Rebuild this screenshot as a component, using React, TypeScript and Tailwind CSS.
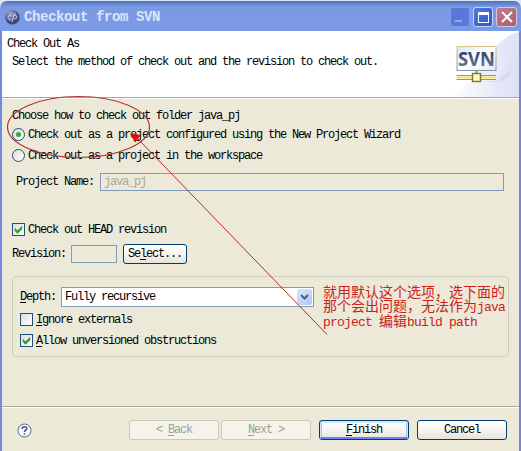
import type { ReactNode } from 'react';

function Check({ checked = false }: { checked?: boolean }) {
  return (
    <span className="flex h-[13px] w-[13px] shrink-0 items-center justify-center border border-[#1c5180] bg-linear-to-br from-[#dcdcd7] to-white">
      {checked && (
        <svg className="h-[9px] w-[9px]" viewBox="0 0 9 9">
          <path d="M1 3.2 L3.5 5.7 L8 1.2 V4 L3.5 8.5 L1 6 Z" fill="#21a121" stroke="#21a121" strokeWidth=".4" />
        </svg>
      )}
    </span>
  );
}

function Radio({ checked = false }: { checked?: boolean }) {
  return (
    <span className="flex h-[13px] w-[13px] shrink-0 items-center justify-center rounded-full border border-[#1c5180] bg-linear-to-br from-[#dcdcd7] to-white">
      {checked && <span className="h-[5px] w-[5px] rounded-full bg-[#2fae2f]" />}
    </span>
  );
}

function Key({ children }: { children: ReactNode }) {
  return <span className="underline underline-offset-2">{children}</span>;
}

function Button({ className, children }: { className: string; children: ReactNode }) {
  return (
    <button
      className={`flex h-5 items-center justify-center whitespace-pre rounded-[3px] border ${className}`}
    >
      {children}
    </button>
  );
}

const enabled = 'border-[#003c74] bg-linear-to-b from-white via-[#f6f5f0] to-[#e6e3da]';
const disabled = 'border-[#c9c7ba] bg-[#f5f4ea] text-[#a1a192]';

export default function App() {
  return (
    <div className="relative flex h-[451px] w-[521px] flex-col overflow-hidden bg-[#dce6f4] font-['Liberation_Mono','Noto_Sans_CJK_SC',monospace] text-[12px] leading-3 tracking-[-1.2px] text-black">
      <div className="mt-px flex h-[30px] shrink-0 items-center rounded-t-[7px] bg-linear-to-b from-[#4b72ba] via-[#7b99e2] via-20% to-[#7c9ae6] pl-[5px] pr-1 pt-0.5">
        <svg className="h-[15px] w-[15px]" viewBox="0 0 15 15">
          <defs>
            <radialGradient id="orb" cx="35%" cy="25%">
              <stop offset="0" stopColor="#a9a9cf" />
              <stop offset="1" stopColor="#434781" />
            </radialGradient>
          </defs>
          <circle cx="7.5" cy="7.5" r="7.2" fill="url(#orb)" />
          <path
            d="M6.5 6 A2.2 2.2 0 1 0 6.5 9.5 M7 12 L9 4.5 Q9.8 3 11 4 M9 5.5 Q12.5 5 12 7.5 Q11 9.5 8.6 8.5"
            fill="none"
            stroke="#c9cde9"
            strokeWidth="1"
          />
        </svg>
        <span className="ml-1 text-sm font-bold tracking-[-0.4px] text-[#d9e6fb]">
          Checkout from SVN
        </span>
        <div className="ml-auto flex gap-[3px]">
          <span className="flex h-5 w-5 items-end rounded-[3px] border border-[#7f9ce8] bg-[#5a78d8] pb-1 pl-1">
            <span className="h-0.5 w-[7px] bg-[#8ba8f0]" />
          </span>
          <span className="flex h-5 w-5 items-center justify-center rounded-[3px] border border-[#c3d3f7] bg-linear-to-br from-[#5279dc] to-[#2a57d0]">
            <span className="h-[11px] w-[11px] border border-t-[3px] border-white" />
          </span>
          <span className="flex h-5 w-[21px] items-center justify-center rounded-[3px] border border-[#d9c8dd] bg-linear-to-br from-[#bd7d90] to-[#ae5d6b]">
            <svg className="h-3 w-3" viewBox="0 0 12 12">
              <path d="M1 1 L11 11 M11 1 L1 11" stroke="white" strokeWidth="2" />
            </svg>
          </span>
        </div>
      </div>

      <div className="flex min-h-0 flex-1 flex-col border-l-2 border-r-2 border-l-[#728adb] border-r-[#7c82ce] bg-[#ece9d8]">
        <header className="flex h-[67px] shrink-0 justify-between border-b border-[#aca899] bg-white pl-[5px]">
          <div className="pt-[7px]">
            <p>Check Out As</p>
            <p className="ml-[5px] mt-1.5">
              Select the method of check out and the revision to check out.
            </p>
          </div>
          <svg className="h-[66px] w-[70px]" viewBox="0 0 70 66">
            <defs>
              <linearGradient id="haze">
                <stop offset="0" stopColor="#fff" />
                <stop offset="1" stopColor="#dce2f6" />
              </linearGradient>
              <linearGradient id="lettering" x1="0" y1="0" x2="0" y2="1">
                <stop offset="0.2" stopColor="#343d69" />
                <stop offset="1" stopColor="#7c86ad" />
              </linearGradient>
              <linearGradient id="panel" x2="1" y2="1">
                <stop offset="0" stopColor="#d9e8f6" />
                <stop offset="0.5" stopColor="#fff" />
                <stop offset="1" stopColor="#dfe9f5" />
              </linearGradient>
              <linearGradient id="panelEdge" x1="0" y1="0" x2="0" y2="1">
                <stop offset="0" stopColor="#d7c48c" />
                <stop offset="1" stopColor="#8195a8" />
              </linearGradient>
            </defs>
            <path d="M0 66 Q28 50 42 22 Q53 5 70 1 V66 Z" fill="url(#haze)" />
            <path d="M42 66 Q53 30 70 20 V66 Z" fill="#d5ddf5" opacity=".2" />
            <path d="M27 51 L48 50 L62 39 Q61 48 48 51 Z" fill="#c8c9dc" opacity=".45" />
            <rect x="8" y="15.5" width="39" height="24" fill="url(#panel)" stroke="url(#panelEdge)" />
            <text
              x="9"
              y="35"
              fontFamily="Open Sans, sans-serif"
              fontSize="19"
              fontWeight="700"
              letterSpacing="0"
              textLength="37"
              lengthAdjust="spacingAndGlyphs"
              fill="url(#lettering)"
            >
              SVN
            </text>
            <path d="M7.5 44.5 H47 M7.5 48.5 H47" stroke="#a8943c" />
            <path d="M7.5 46.5 H47" stroke="#fff5b1" strokeWidth="3" />
            <path d="M7.5 46.5 H47" stroke="#cdb95c" strokeWidth=".5" />
            <path d="M27.5 40 V43" stroke="#8d8034" strokeWidth="2" />
            <rect x="23.5" y="42.5" width="8" height="8" fill="#fff5bd" stroke="#85752d" strokeWidth="1.4" />
          </svg>
        </header>

        <main className="flex h-[308px] shrink-0 flex-col border-t border-white pl-2.5 pr-[10px] pt-[11px]">
          <p>Choose how to check out folder java_pj</p>
          <label className="mt-1.5 flex h-[13px] items-center gap-[3px]">
            <Radio checked />
            Check out as a project configured using the New Project Wizard
          </label>
          <label className="mt-2 flex h-[13px] items-center gap-[3px]">
            <Radio />
            Check out as a project in the workspace
          </label>
          <label className="ml-1 mr-[5px] mt-[11px] flex items-center">
            <span className="w-[84px]">Project Name:</span>
            <span className="flex h-[18px] flex-1 items-center border border-[#7f9db9] pl-[3px] text-[#aca899]">
              java_pj
            </span>
          </label>
          <label className="mt-8 flex h-[13px] items-center gap-[3px]">
            <Check checked />
            Check out HEAD revision
          </label>
          <div className="mt-2 flex items-center">
            <span className="w-[59px]">Revision:</span>
            <span className="h-[18px] w-[46px] border border-[#7f9db9]" />
            <Button className={`ml-1.5 w-16 ${enabled}`}>
              Se<Key>l</Key>ect...
            </Button>
          </div>

          <section className="mt-3 flex h-[81px] shrink-0 rounded-[4px] border border-[#d0cfbd] pl-[7px]">
            <div className="w-[294px] pt-2.5">
              <div className="flex items-center">
                <span className="w-[41px]">
                  <Key>D</Key>epth:
                </span>
                <span className="flex h-5 w-[253px] items-center border border-[#7f9db9] bg-white pl-[3px]">
                  Fully recursive
                  <span className="ml-auto mr-px flex h-4 w-[15px] items-center justify-center rounded-[2px] bg-linear-to-br from-[#dce7fd] to-[#b0c6f4]">
                    <svg className="h-2 w-[9px]" viewBox="0 0 9 8">
                      <path d="M1 2 L4.5 5.5 L8 2" fill="none" stroke="#4d6185" strokeWidth="2" />
                    </svg>
                  </span>
                </span>
              </div>
              <label className="mt-1.5 flex h-[13px] items-center gap-[3px]">
                <Check />
                <span>
                  <Key>I</Key>gnore externals
                </span>
              </label>
              <label className="mt-2 flex h-[13px] items-center gap-[3px]">
                <Check checked />
                <span>
                  <Key>A</Key>llow unversioned obstructions
                </span>
              </label>
            </div>
            <p className="ml-[9px] whitespace-nowrap pt-[9px] text-[14px] leading-[14px] tracking-normal text-[#cc2118]">
              就用默认这个选项，选下面的
              <br />
              那个会出问题，无法作为
              <span className="text-[13px] tracking-[-0.8px]">java</span>
              <br />
              <span className="text-[13px] tracking-[-0.8px]">project </span>
              编辑
              <span className="text-[13px] tracking-[-0.8px]">build path</span>
            </p>
          </section>
        </main>

        <footer className="flex flex-1 items-start border-t border-[#aca899] pl-[15px] pr-3 shadow-[inset_0_1px_0_white]">
          <svg className="mt-4 h-[15px] w-[15px]" viewBox="0 0 15 15">
            <circle cx="7.5" cy="7.5" r="6.5" fill="#f9fbfd" stroke="#536d8e" />
            <path
              d="M5.2 6 Q5.2 3.8 7.5 3.8 Q9.8 3.8 9.8 5.6 Q9.8 6.7 8.5 7.3 Q7.5 7.8 7.5 9 M7.5 10.2 V11.8"
              fill="none"
              stroke="#405c80"
              strokeWidth="1.6"
            />
          </svg>
          <div className="ml-auto mt-[13px] flex">
            <Button className={`w-[90px] ${disabled}`}>
              {'< '}
              <Key>B</Key>ack
            </Button>
            <Button className={`ml-0.5 w-[90px] ${disabled}`}>
              <Key>N</Key>
              {'ext >'}
            </Button>
            <Button
              className={`ml-2 w-[90px] shadow-[inset_0_1px_0_1px_#cee7ff,inset_0_-1px_0_1px_#6982ee,inset_0_0_0_2px_#a6c0ef] ${enabled}`}
            >
              <Key>F</Key>inish
            </Button>
            <Button className={`ml-2 w-[90px] ${enabled}`}>Cancel</Button>
          </div>
        </footer>
      </div>

      <svg
        className="pointer-events-none absolute left-0 top-0 h-[451px] w-[521px]"
        viewBox="0 0 521 451"
      >
        <ellipse cx="78.5" cy="127" rx="71" ry="30.5" fill="none" stroke="#b8342b" strokeWidth="1.2" />
        <path d="M137 138 L327 334.5" stroke="#bf2b20" />
        <path d="M131 133.5 L140 135.5 L135 142 Z" fill="#e60d08" stroke="#e60d08" />
      </svg>
    </div>
  );
}
